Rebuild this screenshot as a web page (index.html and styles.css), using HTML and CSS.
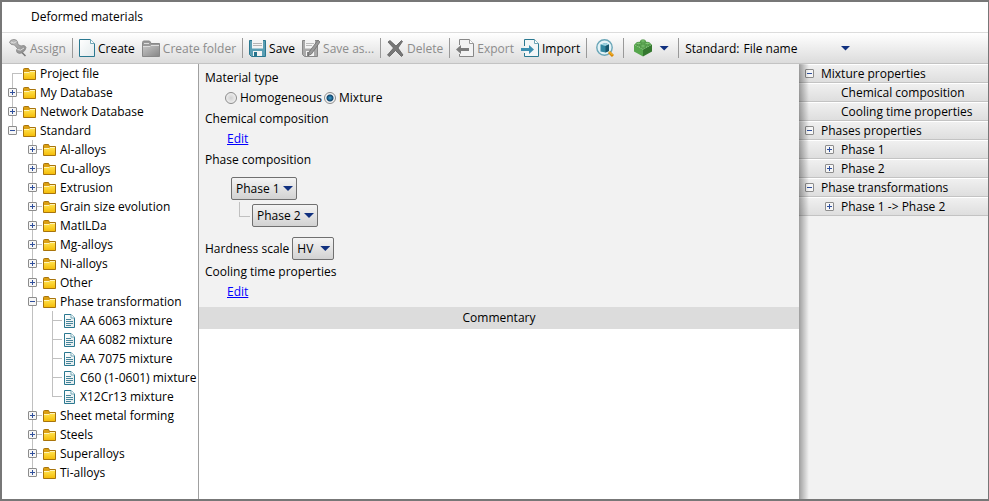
FILE: index.html
```
<!DOCTYPE html>
<html lang="en">
<head>
<meta charset="utf-8">
<meta name="viewport" content="width=device-width, initial-scale=1.0">
<title>Deformed materials</title>
<link rel="stylesheet" href="styles.css">
</head>
<body>
<svg width="0" height="0" class="defs" aria-hidden="true">
  <defs>
    <linearGradient id="gold" x1="0" y1="0" x2="0" y2="1">
      <stop offset="0" stop-color="#ffe04a"/>
      <stop offset="1" stop-color="#f5bd0a"/>
    </linearGradient>
    <linearGradient id="paper" x1="0" y1="0" x2="1" y2="1">
      <stop offset="0" stop-color="#fff"/>
      <stop offset="1" stop-color="#e2eaec"/>
    </linearGradient>
    <linearGradient id="steel" x1="0" y1="0" x2="1" y2="1">
      <stop offset="0" stop-color="#c4c4c4"/>
      <stop offset="1" stop-color="#888"/>
    </linearGradient>
    <symbol id="folder" viewBox="0 0 13 12">
      <path d="M.5 11.5v-10q0-1 1-1h4l1 2h6v9z" fill="#dca012" stroke="#a8740c"/>
      <path d="M1 4h11v7H1z" fill="url(#gold)"/>
      <path d="M1 4.5h5l1-1h5" fill="none" stroke="#fff3b8"/>
    </symbol>
    <symbol id="doc" viewBox="0 0 13 14">
      <path d="M1.500 .5h6.500l3.500 3.500v9.500h-10z" fill="url(#paper)" stroke="#2a7890"/>
      <path d="M8 .5v3.500h3.500" fill="#fff" stroke="#6fa5b5"/>
      <path d="M3 5.500h5M3 7.500h7M3 9.500h7M3 11.500h5" stroke="#47859a"/>
    </symbol>
  </defs>
</svg>
<div class="window">
  <header class="title">Deformed materials</header>

  <div class="toolbar">
    <button type="button" disabled>
      <svg width="18" height="18" viewBox="0 0 18 18"><path d="M11 11.500l5.500 5.500" stroke="#777" stroke-width="1.500"/><path d="M.5 3.500Q1 .5 5 .5q3 0 3.500 2.500l.5 2.500 3 1.500q4-1.500 5 1.500-1 5-6.500 6-3.500-.5-3-3.500l1-1.500-3-3.500q-4 0-5-2.500z" fill="url(#steel)" stroke="#858585" stroke-width=".8"/><path d="M2 3q3 2.500 5.500-.5M8.500 10.500q3 2 6.500-1.500" fill="none" stroke="#ddd"/></svg>
      Assign
    </button>
    <hr>
    <button type="button">
      <svg width="16" height="18" viewBox="0 0 16 18"><path d="M.5.500h11l4 4v13H.5z" fill="url(#paper)" stroke="#2a7890"/><path d="M11.500.500v4h4" fill="#fff" stroke="#6fa5b5"/></svg>
      Create
    </button>
    <button type="button" disabled>
      <svg width="18" height="17" viewBox="0 0 18 17"><path d="M.5 16.500v-14q0-1.500 1.500-1.500h5q1.500 0 2 2.500h8.500v13z" fill="#999" stroke="#888"/><path d="M2 3.500h5" stroke="#ddd"/><path d="M1 6h16v10H1z" fill="url(#steel)"/><path d="M1 6.500h7l1-1h8" fill="none" stroke="#ddd"/></svg>
      Create folder
    </button>
    <hr>
    <button type="button">
      <svg width="17" height="18" viewBox="0 0 17 18"><path d="M.5 1.500h16v16H2.500l-2-2z" fill="#5a9eb3" stroke="#2a7890"/><path d="M3 1h11v8.500H3z" fill="#f4f4f4"/><path d="M4 4.500h9M4 6.500h9" stroke="#b4b4b4"/><path d="M4 12h9v5H4z" fill="#f4f4f4"/><path d="M5 13h3v4H5z" fill="#27748c"/></svg>
      Save
    </button>
    <button type="button" disabled>
      <svg width="18" height="18" viewBox="0 0 18 18"><path d="M.5 1.500h15v16h-13l-2-2z" fill="#aaa" stroke="#888"/><path d="M3 1h10v8.500H3z" fill="#f4f4f4"/><path d="M4 4.500h8M4 6.500h6" stroke="#bbb"/><path d="M4 12h8v5H4z" fill="#f4f4f4"/><path d="M5 13h2v4H5z" fill="#888"/><path d="M16 1l2 2-8.500 12-3 1.500.500-3.500z" fill="#999" stroke="#666" stroke-width=".7"/></svg>
      Save as...
    </button>
    <hr>
    <button type="button" disabled>
      <svg width="17" height="17" viewBox="0 0 17 17"><path d="M1 2l2-1.500 6 5.500 5.500-5.500 1 1-4.500 6.500 5 7-1.500 1.500-6-6-6 6-2-1.500L6.500 8z" fill="#777" stroke="#5d5d5d" stroke-width=".8"/></svg>
      Delete
    </button>
    <hr>
    <button type="button" disabled>
      <svg width="18" height="18" viewBox="0 0 18 18"><path d="M3.500 6V.5h10l4 4v13h-14V15" fill="#f3f3f3" stroke="#888"/><path d="M13.500.500v4h4" fill="#fff" stroke="#999"/><path d="M0 10.500L5 6v3h8v3H5v3z" fill="#7d7d7d"/></svg>
      Export
    </button>
    <button type="button">
      <svg width="18" height="18" viewBox="0 0 18 18"><path d="M3.500 7V.5h10l4 4v13h-14V14" fill="#f3f6f7" stroke="#2a7890"/><path d="M13.500.500v4h4" fill="#fff" stroke="#6fa5b5"/><path d="M0 9h8V6l5 4.500L8 15v-3H0z" fill="#3d8fb0"/></svg>
      Import
    </button>
    <hr>
    <button type="button" class="pick" aria-label="Find">
      <svg width="18" height="18" viewBox="0 0 18 18"><circle cx="8.500" cy="8.500" r="7.700" fill="#e3f2f6" stroke="#6aa6b8" stroke-width="1.400"/><path d="M4.500 5.500l5-1.500 3.500 1.500v6.500l-3.500 1.500-5-1z" fill="#3287a0"/><path d="M4.500 5.500l5-1.500 3.500 1.500-3.500 1.500z" fill="#9dd2df"/><path d="M9.500 7L13 5.500V12l-3.500 1.500z" fill="#17566c"/><path d="M13 13l4 4" stroke="#d88908" stroke-width="3"/><path d="M13 12.500l3.500 3.500" stroke="#ffc83a"/></svg>
    </button>
    <hr>
    <button type="button" class="pick" aria-label="Blocks">
      <svg width="20" height="18" viewBox="0 0 20 18"><path d="M1 5.500l9 5V17.500l-9-5z" fill="#56a64d"/><path d="M10 10.500l9-5v7l-9 5z" fill="#35782f"/><path d="M1 5.500l9-4.500 9 4.500-9 5z" fill="#6ab45f"/><g fill="#7fc674" stroke="#43893b" stroke-width=".7"><path d="M7.500 2v1.500q2.500 1.500 5 0V2"/><ellipse cx="10" cy="2" rx="2.500" ry="1.200"/><path d="M3 4.500v1.500q2.500 1.500 5 0V4.500"/><ellipse cx="5.500" cy="4.500" rx="2.500" ry="1.200"/><path d="M12 4.500v1.500q2.500 1.500 5 0V4.500"/><ellipse cx="14.500" cy="4.500" rx="2.500" ry="1.200"/><path d="M7.500 7v1.500q2.500 1.500 5 0V7"/><ellipse cx="10" cy="7" rx="2.500" ry="1.200"/></g></svg>
      <span class="arrow"></span>
    </button>
    <hr>
    <label for="standard">Standard:</label>
    <span class="drop flat"><select id="standard"><option>File name</option></select></span>
  </div>

  <div class="panes">
    <nav class="tree">
      <ul>
        <li><div class="node leaf"><svg class="icon"><use href="#folder"/></svg>Project file</div></li>
        <li><div class="node"><button class="toggle plus" aria-label="Expand"></button><svg class="icon"><use href="#folder"/></svg>My Database</div></li>
        <li><div class="node"><button class="toggle plus" aria-label="Expand"></button><svg class="icon"><use href="#folder"/></svg>Network Database</div></li>
        <li><div class="node"><button class="toggle" aria-label="Collapse"></button><svg class="icon"><use href="#folder"/></svg>Standard</div>
          <ul>
            <li><div class="node"><button class="toggle plus" aria-label="Expand"></button><svg class="icon"><use href="#folder"/></svg>Al-alloys</div></li>
            <li><div class="node"><button class="toggle plus" aria-label="Expand"></button><svg class="icon"><use href="#folder"/></svg>Cu-alloys</div></li>
            <li><div class="node"><button class="toggle plus" aria-label="Expand"></button><svg class="icon"><use href="#folder"/></svg>Extrusion</div></li>
            <li><div class="node"><button class="toggle plus" aria-label="Expand"></button><svg class="icon"><use href="#folder"/></svg>Grain size evolution</div></li>
            <li><div class="node"><button class="toggle plus" aria-label="Expand"></button><svg class="icon"><use href="#folder"/></svg>MatILDa</div></li>
            <li><div class="node"><button class="toggle plus" aria-label="Expand"></button><svg class="icon"><use href="#folder"/></svg>Mg-alloys</div></li>
            <li><div class="node"><button class="toggle plus" aria-label="Expand"></button><svg class="icon"><use href="#folder"/></svg>Ni-alloys</div></li>
            <li><div class="node"><button class="toggle plus" aria-label="Expand"></button><svg class="icon"><use href="#folder"/></svg>Other</div></li>
            <li><div class="node"><button class="toggle" aria-label="Collapse"></button><svg class="icon"><use href="#folder"/></svg>Phase transformation</div>
              <ul>
                <li><div class="node leaf"><svg class="icon"><use href="#doc"/></svg>AA 6063 mixture</div></li>
                <li><div class="node leaf"><svg class="icon"><use href="#doc"/></svg>AA 6082 mixture</div></li>
                <li><div class="node leaf"><svg class="icon"><use href="#doc"/></svg>AA 7075 mixture</div></li>
                <li><div class="node leaf"><svg class="icon"><use href="#doc"/></svg>C60 (1-0601) mixture</div></li>
                <li><div class="node leaf"><svg class="icon"><use href="#doc"/></svg>X12Cr13 mixture</div></li>
              </ul>
            </li>
            <li><div class="node"><button class="toggle plus" aria-label="Expand"></button><svg class="icon"><use href="#folder"/></svg>Sheet metal forming</div></li>
            <li><div class="node"><button class="toggle plus" aria-label="Expand"></button><svg class="icon"><use href="#folder"/></svg>Steels</div></li>
            <li><div class="node"><button class="toggle plus" aria-label="Expand"></button><svg class="icon"><use href="#folder"/></svg>Superalloys</div></li>
            <li><div class="node"><button class="toggle plus" aria-label="Expand"></button><svg class="icon"><use href="#folder"/></svg>Ti-alloys</div></li>
          </ul>
        </li>
      </ul>
    </nav>

    <main>
      <form class="material">
        <div class="caption" id="type">Material type</div>
        <div class="radios" role="radiogroup" aria-labelledby="type">
          <label><input type="radio" name="type">Homogeneous</label>
          <label><input type="radio" name="type" checked>Mixture</label>
        </div>
        <div class="caption">Chemical composition</div>
        <div class="edit"><a href="#chemical">Edit</a></div>
        <div class="caption">Phase composition</div>
        <div class="phases">
          <span class="drop"><select aria-label="Phase 1"><option>Phase 1</option></select></span>
          <div class="child">
            <span class="drop"><select aria-label="Phase 2"><option>Phase 2</option></select></span>
          </div>
        </div>
        <div class="hardness">
          <label for="hardness">Hardness scale</label>
          <span class="drop small"><select id="hardness"><option>HV</option></select></span>
        </div>
        <div class="caption">Cooling time properties</div>
        <div class="edit"><a href="#cooling">Edit</a></div>
      </form>
      <div class="commentary" id="comment">Commentary</div>
      <textarea aria-labelledby="comment"></textarea>
    </main>

    <aside>
      <div class="prop"><button class="toggle" aria-label="Collapse"></button>Mixture properties</div>
      <div class="prop sub leaf">Chemical composition</div>
      <div class="prop sub leaf">Cooling time properties</div>
      <div class="prop"><button class="toggle" aria-label="Collapse"></button>Phases properties</div>
      <div class="prop sub"><button class="toggle plus" aria-label="Expand"></button>Phase 1</div>
      <div class="prop sub"><button class="toggle plus" aria-label="Expand"></button>Phase 2</div>
      <div class="prop"><button class="toggle" aria-label="Collapse"></button>Phase transformations</div>
      <div class="prop sub"><button class="toggle plus" aria-label="Expand"></button>Phase 1 -&gt; Phase 2</div>
    </aside>
  </div>
</div>
</body>
</html>
```
FILE: styles.css
```
* {
  box-sizing: border-box;
}
body {
  margin: 0;
  font: 12px/19px "Open Sans", "Noto Sans", sans-serif;
  color: #000;
}
button, select, input, textarea {
  font: inherit;
  color: inherit;
  margin: 0;
}
.defs {
  position: absolute;
}
.window {
  display: flex;
  flex-direction: column;
  min-height: 100vh;
  border: 2px solid #777;
  border-right-width: 1px;
  background: #fff;
}
.title {
  height: 31px;
  padding-left: 29px;
  line-height: 30px;
  border-bottom: 1px solid #dcdcdc;
}

/* toolbar */
.toolbar {
  display: flex;
  align-items: center;
  height: 31px;
  padding-left: 7px;
  white-space: nowrap;
  border-bottom: 1px solid #c3c3c3;
  background: linear-gradient(#fff, #dcdcdc);
}
.toolbar button {
  display: flex;
  align-items: center;
  gap: 3px;
  padding: 0;
  border: 0;
  background: none;
}
.toolbar button + button {
  margin-left: 7px;
}
.toolbar button:disabled {
  color: #8c8c8c;
}
.toolbar svg {
  flex: none;
}
.toolbar hr {
  flex: none;
  width: 1px;
  height: 20px;
  margin: 0 6px;
  border: 0;
  background: #999;
}
.toolbar .pick {
  gap: 6px;
  padding: 0 3px;
}
.arrow, .drop::after {
  content: '';
  width: 10px;
  height: 5px;
  background: #10307f;
  clip-path: polygon(0 0, 100% 0, 50% 100%);
}

/* drop-downs: the arrow shares the grid cell with the select */
.drop {
  display: inline-grid;
  width: 66px;
  align-items: center;
}
.drop select, .drop::after {
  grid-area: 1 / 1;
}
.drop::after {
  justify-self: end;
  margin-right: 4px;
  pointer-events: none;
}
.drop select {
  appearance: none;
  width: 100%;
  height: 23px;
  padding: 0 4px;
  border: 1px solid #707070;
  border-radius: 2px;
  background: linear-gradient(#f4f4f4, #d2d2d2);
}
.drop.small {
  width: 42px;
}
.drop.flat {
  width: 115px;
}
.drop.flat select {
  border: 0;
  background: none;
}

/* panes */
.panes {
  flex: 1;
  display: flex;
}
.tree {
  flex: none;
  width: 197px;
  border-right: 1px solid #a0a0a0;
  white-space: nowrap;
}
.tree ul {
  margin: 0;
  padding: 0 0 0 20px;
  list-style: none;
}
.tree > ul {
  padding-left: 6px;
}
.tree li {
  background: linear-gradient(#c0c0c0, #c0c0c0) 4px 0 / 1px 100% no-repeat;
}
.tree > ul > li:first-child {
  background-position: 4px 9px;
}
.tree li:last-child {
  background-size: 1px 9px;
}
.node {
  display: flex;
  align-items: center;
  height: 19px;
  background: linear-gradient(#c0c0c0, #c0c0c0) 4px 9px / 10px 1px no-repeat;
}
.node.leaf {
  padding-left: 15px;
}
.icon {
  width: 13px;
  height: 14px;
  margin-right: 4px;
}
.toggle {
  flex: none;
  width: 9px;
  height: 9px;
  padding: 0;
  border: 1px solid #8c8c8c;
  border-radius: 1px;
  background: linear-gradient(#30509c, #30509c) center / 5px 1px no-repeat, #f6f6f6;
}
.toggle.plus {
  background: linear-gradient(#30509c, #30509c) center / 5px 1px no-repeat, linear-gradient(#30509c, #30509c) center / 1px 5px no-repeat, #f6f6f6;
}
.node .toggle {
  margin-right: 6px;
}

main {
  flex: 1;
  display: flex;
  flex-direction: column;
}
.material {
  padding: 3px 6px 5px;
  line-height: 20px;
  background: #f2f2f2;
}
.caption {
  margin-top: 1px;
}
.radios {
  display: flex;
  gap: 2px;
  padding-left: 20px;
}
.radios label {
  display: flex;
  align-items: center;
  gap: 3px;
}
.radios input {
  appearance: none;
  width: 12px;
  height: 12px;
  border: 1px solid #8c8c8c;
  border-radius: 50%;
  background: radial-gradient(#d0d0d0, #fafafa);
}
.radios input:checked {
  background: radial-gradient(circle, #3aa0d0 0, #12466e 3px, #f4f4f4 4px);
}
.edit {
  padding-left: 22px;
}
.edit a {
  color: #00f;
}
.phases {
  display: flex;
  flex-direction: column;
  gap: 4px;
  padding: 7px 0 10px 26px;
}
.child {
  display: flex;
  padding-left: 20px;
}
.child::before {
  content: '';
  width: 10px;
  height: 14px;
  margin: -2px 2px 0 -12px;
  border: solid #c0c0c0;
  border-width: 0 0 1px 1px;
}
.hardness {
  display: flex;
  align-items: center;
  gap: 3px;
  margin-bottom: 2px;
}
.commentary {
  height: 22px;
  line-height: 22px;
  text-align: center;
  background: #dcdcdc;
}
textarea {
  flex: 1;
  width: 100%;
  border: 0;
  resize: none;
}

aside {
  position: relative;
  flex: none;
  width: 189px;
  background: #f2f2f2;
}
/* shadow cast on the panel by the main pane */
aside::before {
  content: '';
  position: absolute;
  top: 0;
  bottom: 0;
  left: 0;
  width: 10px;
  background: linear-gradient(to right, rgba(0, 0, 0, 0.35), transparent);
}
.prop {
  display: flex;
  align-items: center;
  gap: 7px;
  height: 19px;
  padding-left: 6px;
  border-top: 1px solid #fff;
  border-bottom: 1px solid #c3c3c3;
  background: linear-gradient(#f0f0f0, #dedede);
}
.sub {
  padding-left: 26px;
}
.sub.leaf {
  padding-left: 42px;
}
```
